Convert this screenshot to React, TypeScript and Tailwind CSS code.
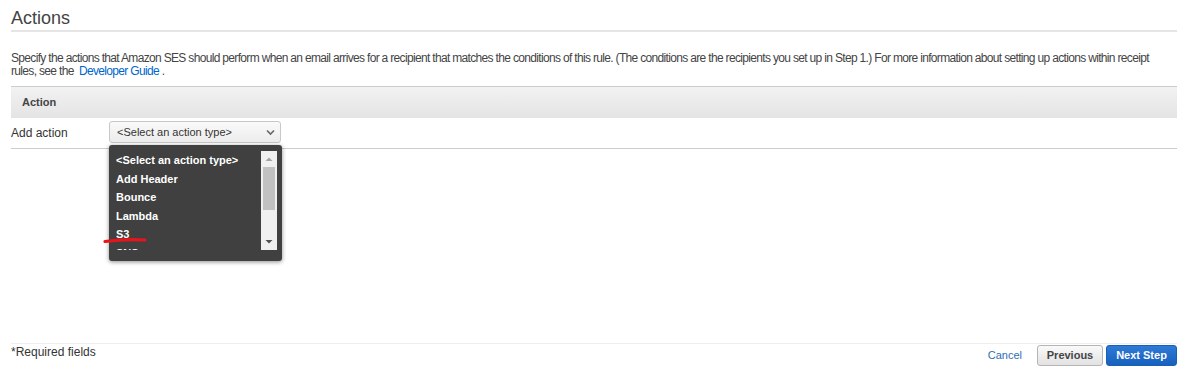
import React from "react";

const options = ["<Select an action type>", "Add Header", "Bounce", "Lambda", "S3", "SNS"];

function ActionDropdown() {
  return (
    <div className="absolute left-0 top-[24px] z-10 h-[116px] w-[173px] overflow-hidden rounded-[3px] bg-[#404040] shadow-[0_1px_4px_rgba(0,0,0,0.45)]">
      <div className="ml-[7px] mt-[6px] h-[99px] overflow-hidden">
        {options.map((o) => (
          <div key={o} className="h-[18.5px] text-[11px] font-bold leading-[18.5px] text-white">
            {o}
          </div>
        ))}
      </div>
      <div className="absolute left-[152px] top-[6px] flex h-[99px] w-[16px] flex-col items-center bg-[#f0f0f0]">
        <svg width="16" height="16" viewBox="0 0 16 16" className="shrink-0">
          <path d="M4.5 10 L8 6.5 L11.5 10 Z" fill="#a3a3a3" />
        </svg>
        <div className="h-[43px] w-[12px] bg-[#c1c1c1]" />
        <div className="flex-1" />
        <svg width="16" height="16" viewBox="0 0 16 16" className="shrink-0">
          <path d="M4.5 6 L8 9.5 L11.5 6 Z" fill="#505050" />
        </svg>
      </div>
    </div>
  );
}

export default function App() {
  return (
    <div className="relative h-[375px] w-[1186px] bg-white font-['Liberation_Sans',Arial,sans-serif] text-[#444]">
      <div className="pl-[11px] pr-[9px]">
        <h2 className="pt-[7px] text-[18px] leading-[22px] text-[#444]">Actions</h2>
        <div className="mt-[1px] h-[2px] bg-[#e5e5e5]" />
        <p className="mt-[20px] text-[12px] leading-[13px] tracking-[-0.67px] text-[#444]">
          Specify the actions that Amazon SES should perform when an email arrives for a recipient that matches the
          conditions of this rule. (The conditions are the recipients you set up in Step 1.) For more information about
          setting up actions within receipt
          <br />
          rules, see the&nbsp; <a className="text-[#0066cc]">Developer Guide</a> .
        </p>
        <div className="mt-[8px] flex h-[32px] items-center border-t border-[#cccccc] bg-gradient-to-b from-[#f2f2f2] to-[#e4e4e4] pl-[11px] text-[11px] font-bold text-[#444]">
          Action
        </div>
        <div className="flex h-[31px] items-start border-b border-[#cccccc] pt-[3px]">
          <span className="w-[98px] pt-[5px] text-[12px] leading-[14px] text-[#333]">Add action</span>
          <div className="relative">
            <div className="flex h-[22px] w-[172px] items-center justify-between rounded-[3px] border border-[#c8c8c8] bg-gradient-to-b from-[#fafafa] to-[#ececec] pl-[7px] pr-[5px] text-[11px] text-[#333]">
              <span>&lt;Select an action type&gt;</span>
              <svg width="9" height="7" viewBox="0 0 9 7">
                <path d="M1 1.5 L4.5 5 L8 1.5" stroke="#666" strokeWidth="1.6" fill="none" />
              </svg>
            </div>
            <ActionDropdown />
          </div>
        </div>
      </div>

      <svg className="absolute left-[103px] top-[236px] z-20" width="44" height="8" viewBox="0 0 44 8">
        <path d="M2 5.5 Q20 3 42 4" stroke="#e8141c" strokeWidth="3.2" strokeLinecap="round" fill="none" />
      </svg>

      <div className="absolute bottom-0 left-[11px] right-[9px] flex h-[32px] items-start justify-between border-t border-[#eeeeee]">
        <span className="pt-[1px] text-[12px] leading-[14px] text-[#333]">*Required fields</span>
        <div className="flex items-center pt-[1px]">
          <a className="mr-[15px] text-[11px] text-[#2f6db5]">Cancel</a>
          <button className="h-[21px] w-[66px] rounded-[3px] border border-[#b5b5b5] bg-gradient-to-b from-[#fafafa] to-[#e2e2e2] text-[11px] font-bold text-[#444]">
            Previous
          </button>
          <button className="ml-[3px] h-[21px] w-[71px] rounded-[3px] border border-[#1a5fb4] bg-gradient-to-b from-[#2f7ad6] to-[#1660be] text-[11px] font-bold text-white">
            Next Step
          </button>
        </div>
      </div>
    </div>
  );
}
